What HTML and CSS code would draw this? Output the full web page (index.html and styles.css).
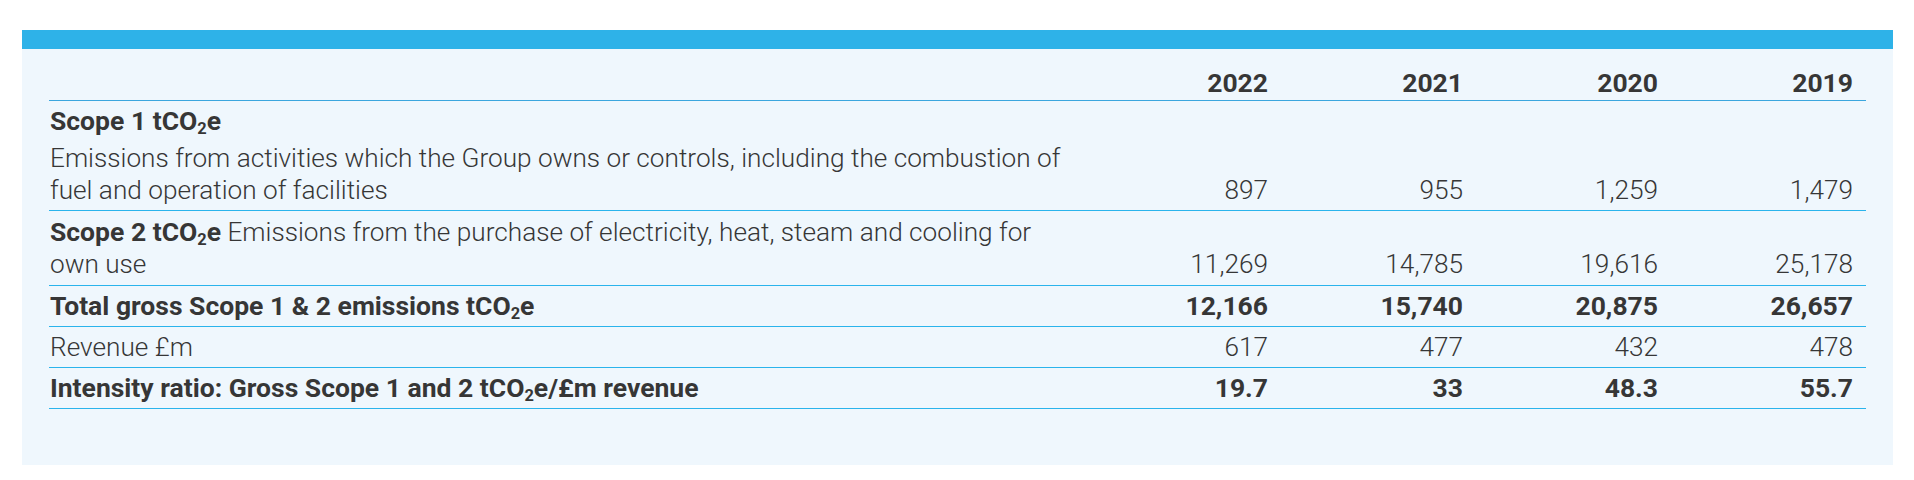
FILE: index.html
```html
<!DOCTYPE html>
<html lang="en">
<head>
<meta charset="utf-8">
<title>Emissions</title>
<link rel="stylesheet" href="styles.css">
</head>
<body>
<div class="panel">
  <div class="bar"></div>
  <div class="inner">
    <table class="data">
      <colgroup>
        <col class="c-label">
        <col class="c-num">
        <col class="c-num">
        <col class="c-num">
        <col class="c-num">
      </colgroup>
      <thead>
        <tr>
          <th class="label"></th>
          <th>2022</th>
          <th>2021</th>
          <th>2020</th>
          <th>2019</th>
        </tr>
      </thead>
      <tbody>
        <tr>
          <td class="label"><div class="title">Scope 1 tCO<sub>2</sub>e</div><div>Emissions from activities which the Group owns or controls, including the combustion of fuel and operation of facilities</div></td>
          <td>897</td>
          <td>955</td>
          <td>1,259</td>
          <td>1,479</td>
        </tr>
        <tr class="multi">
          <td class="label"><b>Scope 2 tCO<sub>2</sub>e</b> Emissions from the purchase of electricity, heat, steam and cooling for own use</td>
          <td>11,269</td>
          <td>14,785</td>
          <td>19,616</td>
          <td>25,178</td>
        </tr>
        <tr class="strong">
          <td class="label">Total gross Scope 1 &amp; 2 emissions tCO<sub>2</sub>e</td>
          <td>12,166</td>
          <td>15,740</td>
          <td>20,875</td>
          <td>26,657</td>
        </tr>
        <tr>
          <td class="label">Revenue £m</td>
          <td>617</td>
          <td>477</td>
          <td>432</td>
          <td>478</td>
        </tr>
        <tr class="strong">
          <td class="label">Intensity ratio: Gross Scope 1 and 2 tCO<sub>2</sub>e/£m revenue</td>
          <td>19.7</td>
          <td>33</td>
          <td>48.3</td>
          <td>55.7</td>
        </tr>
      </tbody>
    </table>
  </div>
</div>
</body>
</html>
```

FILE: styles.css
```css
html, body {
  margin: 0;
  padding: 0;
  background: #ffffff;
}
body {
  padding: 30px 21px 0 22px;
  font-family: "Roboto Light", Roboto, "Liberation Sans", sans-serif;
  color: #363636;
}
.panel {
  background: #eff7fd;
}
.bar {
  height: 19px;
  background: #2eb2e8;
}
.inner {
  padding: 13px 27px 56px 27px;
}
.data {
  width: 100%;
  border-collapse: collapse;
  table-layout: fixed;
  font-size: 26.2px;
  line-height: 32px;
  font-weight: 300;
}
.c-num {
  width: 195px;
}
.data th,
.data td {
  padding: 4px 13px 4px 1px;
  text-align: right;
  vertical-align: bottom;
}
.data th {
  font-family: Roboto, "Liberation Sans", sans-serif;
  font-size: 26.5px;
  font-weight: 700;
  padding-top: 5px;
  padding-bottom: 1px;
  border-bottom: 1px solid #3ba6de;
}
.data td {
  border-bottom: 1px solid #2ab4ec;
}
.multi td {
  padding-top: 5px;
  padding-bottom: 5px;
}
.data .label {
  text-align: left;
}
.title,
.data b,
.strong td {
  font-family: Roboto, "Liberation Sans", sans-serif;
  font-size: 26.5px;
  font-weight: 700;
}
.title {
  margin-bottom: 5px;
}
sub {
  font-size: 0.62em;
  line-height: 0;
  vertical-align: -0.22em;
}
```
